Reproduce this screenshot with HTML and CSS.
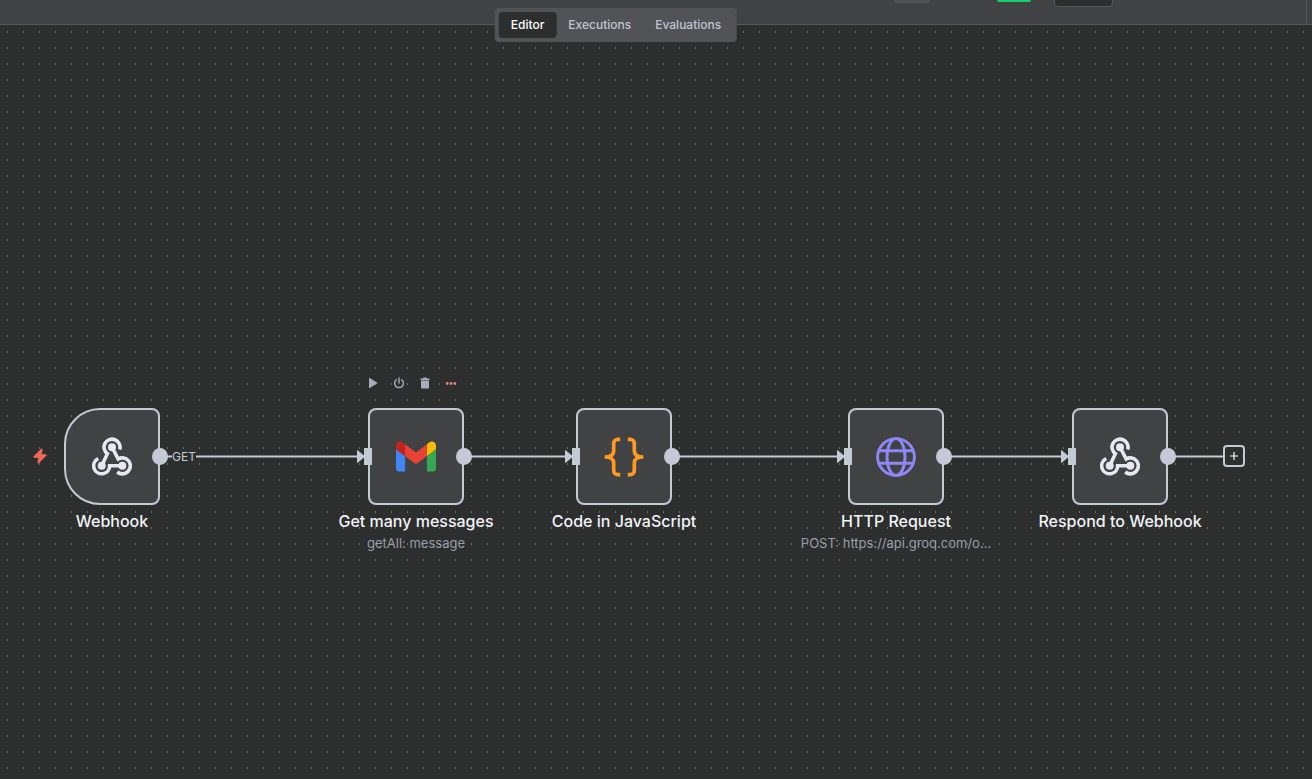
FILE: index.html
```html
<!DOCTYPE html>
<html lang="en">
<head>
<meta charset="utf-8">
<title>Workflow editor</title>
<link rel="stylesheet" href="styles.css">
</head>
<body>
<svg class="defs" aria-hidden="true">
  <symbol id="webhook" viewBox="0 0 40 40">
    <g fill="none" stroke="currentColor" stroke-width="3.600">
      <path d="M9.700 28.800L15.400 16.700A8 8 0 1 1 27.700 12.400"/>
      <path d="M20 10.200L26.200 22A8 8 0 1 1 25.200 35"/>
      <path d="M30.300 28.800H17.700A8 8 0 1 1 6.200 21.600"/>
    </g>
    <g fill="currentColor"><circle cx="20" cy="10.200" r="4"/><circle cx="9.700" cy="28.800" r="4"/><circle cx="30.300" cy="28.800" r="4"/></g>
  </symbol>
</svg>
<div class="app">
  <header class="topbar">
    <span class="stub stub-grey"></span>
    <span class="stub stub-green"></span>
    <span class="stub stub-dark"></span>
    <span class="divider"></span>
    <nav class="tabs" aria-label="Workflow views">
      <button class="tab active" type="button">Editor</button>
      <button class="tab" type="button">Executions</button>
      <button class="tab" type="button">Evaluations</button>
    </nav>
  </header>
  <main class="canvas">
    <svg class="edges" aria-hidden="true">
      <pattern id="dots" x="7" y="6" width="16" height="16" patternUnits="userSpaceOnUse"><rect width="1" height="2" fill="#6e6f6f"/></pattern>
      <rect width="100%" height="100%" fill="url(#dots)"/>
      <g stroke="#c3c9d5" stroke-width="2">
        <path d="M160 431.500H360M464 431.500H568M672 431.500H840M944 431.500H1064M1168 431.500H1224"/>
      </g>
      <g fill="#c3c9d5" stroke="#c3c9d5" stroke-linejoin="round">
        <path d="M357.500 425.500V437.500L364.500 431.500Z"/>
        <path d="M565.500 425.500V437.500L572.500 431.500Z"/>
        <path d="M837.500 425.500V437.500L844.500 431.500Z"/>
        <path d="M1061.500 425.500V437.500L1068.500 431.500Z"/>
      </g>
    </svg>
    <span class="edge-label">GET</span>

    <svg class="bolt" viewBox="0 0 14 16" aria-hidden="true"><path d="M8.200 1L.8 8.400Q.3 9.300 1.200 9.500H5.600L4.700 14.500Q4.900 15.600 5.900 14.900L13.200 7.600Q13.700 6.600 12.700 6.400H8.400L9.300 1.400Q9.100 .3 8.200 1Z" fill="#f2695a" stroke="#f2695a" stroke-width=".6"/></svg>

    <section class="node trigger n-webhook">
      <div class="box"><svg class="icon"><use href="#webhook"/></svg><i class="out"></i></div>
      <h2 class="title">Webhook</h2>
    </section>

    <section class="node n-gmail">
      <div class="tools">
        <button type="button" aria-label="Execute step"><svg viewBox="0 0 12 12"><path d="M2 1.300V10.700Q2 11.500 2.700 11L10 6.600Q10.600 6 10 5.400L2.700 1Q2 .6 2 1.300Z" fill="currentColor"/></svg></button>
        <button type="button" aria-label="Deactivate"><svg viewBox="0 0 12 12"><path d="M3.300 2.700A4.400 4.400 0 1 0 8.700 2.700M6 1V6" fill="none" stroke="currentColor" stroke-width="1.400" stroke-linecap="round"/></svg></button>
        <button type="button" aria-label="Delete"><svg viewBox="0 0 12 12"><path d="M1.500 1.500H4L4.600 .6H7.400L8 1.500H10.500V3H1.500ZM2 3.600H10V10.400Q10 11.600 8.800 11.600H3.200Q2 11.600 2 10.400Z" fill="currentColor"/></svg></button>
        <button type="button" class="more" aria-label="More"><svg viewBox="0 0 12 12"><g fill="currentColor"><circle cx="2.200" cy="6.500" r="1.400"/><circle cx="6" cy="6.500" r="1.400"/><circle cx="9.800" cy="6.500" r="1.400"/></g></svg></button>
      </div>
      <div class="box"><i class="in"></i>
        <svg class="icon" viewBox="52 32 88 88"><path fill="#4285f4" d="M58 108h14V74L52 59v43c0 3.320 2.690 6 6 6"/><path fill="#34a853" d="M120 108h14c3.320 0 6-2.690 6-6V59l-20 15"/><path fill="#fbbc04" d="M120 48v26l20-15v-8c0-7.420-8.470-11.650-14.400-7.200"/><path fill="#ea4335" d="M72 74V48l24 18 24-18v26L96 92"/><path fill="#c5221f" d="M52 51v8l20 15V48l-5.600-4.200c-5.940-4.450-14.400-.22-14.400 7.200"/></svg>
        <i class="out"></i></div>
      <h2 class="title">Get many messages</h2>
      <p class="sub">getAll: message</p>
    </section>

    <section class="node n-code">
      <div class="box"><i class="in"></i>
        <svg class="icon" viewBox="0 0 40 40"><g fill="none" stroke="#ff9922" stroke-width="3.700"><path d="M16.200 2.300H13.700a4 4 0 0 0-4 4V14c0 3.600-2.200 6-9 6 6.800 0 9 2.400 9 6V33.700a4 4 0 0 0 4 4H16.200"/><path d="M23.800 2.300H26.300a4 4 0 0 1 4 4V14c0 3.600 2.200 6 9 6-6.800 0-9 2.400-9 6V33.700a4 4 0 0 1-4 4H23.800"/></g></svg>
        <i class="out"></i></div>
      <h2 class="title">Code in JavaScript</h2>
    </section>

    <section class="node n-http">
      <div class="box"><i class="in"></i>
        <svg class="icon" viewBox="0 0 40 40"><g fill="none" stroke="#8f87f7" stroke-width="2.900"><circle cx="20" cy="20" r="18.400"/><ellipse cx="20" cy="20" rx="9" ry="18.400"/><path d="M3 13.700H37M3 26.300H37"/></g></svg>
        <i class="out"></i></div>
      <h2 class="title">HTTP Request</h2>
      <p class="sub">POST: https://api.groq.com/o...</p>
    </section>

    <section class="node n-respond">
      <div class="box"><i class="in"></i><svg class="icon"><use href="#webhook"/></svg><i class="out"></i></div>
      <h2 class="title">Respond to Webhook</h2>
    </section>

    <button class="add" type="button" aria-label="Add node"><svg viewBox="0 0 10 10"><path d="M5 1V9M1 5H9" stroke="#fff" stroke-width="1.200"/></svg></button>
  </main>
</div>
</body>
</html>
```
FILE: styles.css
```css
* { box-sizing: border-box; }
body {
  margin: 0;
  font-family: Inter, "Open Sans", sans-serif;
  background: #2d2e2e;
  color: #f2f3f7;
}
button { font: inherit; border: 0; padding: 0; background: none; color: inherit; }
.defs { position: absolute; width: 0; height: 0; }
.app { display: flex; flex-direction: column; min-height: 100vh; }

.topbar {
  position: relative;
  display: flex;
  justify-content: flex-end;
  align-items: flex-start;
  height: 25px;
  padding-right: 5px;
  background: #414244;
  border-bottom: 1px solid #57585a;
}
.stub-grey { width: 36px; height: 3px; margin-right: 67px; border-radius: 0 0 4px 4px; background: #525356; }
.stub-green { width: 34px; height: 2px; margin-right: 23px; border-radius: 0 0 8px 8px; background: #13cf6b; }
.stub-dark { width: 59px; height: 7px; margin-right: 193px; border: 1px solid #555659; border-top: 0; border-radius: 0 0 4px 4px; background: #2d2e2e; }
.divider { width: 1px; height: 24px; background: #57585a; }

.tabs {
  position: absolute;
  z-index: 2;
  top: 8px;
  left: calc(50% - 40px);
  transform: translateX(-50%);
  display: flex;
  padding: 4px;
  border-radius: 4px;
  background: #525356;
}
.tab {
  height: 26px;
  padding: 0 12px 2px;
  border-radius: 4px;
  font-size: 12px;
  font-weight: 500;
  color: #bfc5d4;
}
.tab.active { background: #2d2e2e; color: #fff; }

.canvas {
  position: relative;
  flex: 1;
  overflow: hidden;
}
.edges { position: absolute; inset: 0; width: 100%; height: 100%; }
.edge-label {
  position: absolute;
  left: 172px;
  top: 424px;
  font-size: 12px;
  line-height: 16px;
  color: #c3c9d5;
  background: #2d2e2e;
}
.bolt { position: absolute; left: 33px; top: 423px; width: 14px; height: 16px; }

.node {
  position: absolute;
  top: 383px;
  width: 96px;
  display: flex;
  flex-direction: column;
  align-items: center;
}
.n-webhook { left: 64px; }
.n-gmail { left: 368px; }
.n-code { left: 576px; }
.n-http { left: 848px; }
.n-respond { left: 1072px; }
.box {
  position: relative;
  display: grid;
  place-items: center;
  width: 96px;
  height: 97px;
  border: 2px solid #c3c9d5;
  border-radius: 8px;
  background: #414244;
}
.trigger .box { border-radius: 36px 8px 8px 36px; }
.icon { width: 40px; height: 40px; color: #e6e9f2; }
.in, .out { position: absolute; background: #c3c9d5; }
.in { left: -6px; top: 38px; width: 8px; height: 17px; }
.out { right: -10px; top: 38px; width: 16px; height: 17px; border-radius: 50%; }
.title {
  margin: 6px 0 0;
  font-size: 16px;
  line-height: 20px;
  font-weight: 500;
  white-space: nowrap;
}
.sub {
  margin: 3px 0 0;
  font-size: 13px;
  line-height: 18px;
  color: #9b9ea8;
  white-space: nowrap;
}
.tools {
  position: absolute;
  top: -31px;
  left: -1px;
  display: flex;
  gap: 14px;
  color: #a9adb9;
}
.tools button { width: 12px; height: 12px; }
.tools svg { display: block; width: 12px; height: 12px; }
.tools .more { color: #e8837a; }
.add {
  position: absolute;
  left: 1223px;
  top: 420px;
  display: grid;
  place-items: center;
  width: 22px;
  height: 22px;
  border: 2px solid #c3c9d5;
  border-radius: 4px;
  background: #2d2e2e;
}
.add svg { width: 10px; height: 10px; }
```
